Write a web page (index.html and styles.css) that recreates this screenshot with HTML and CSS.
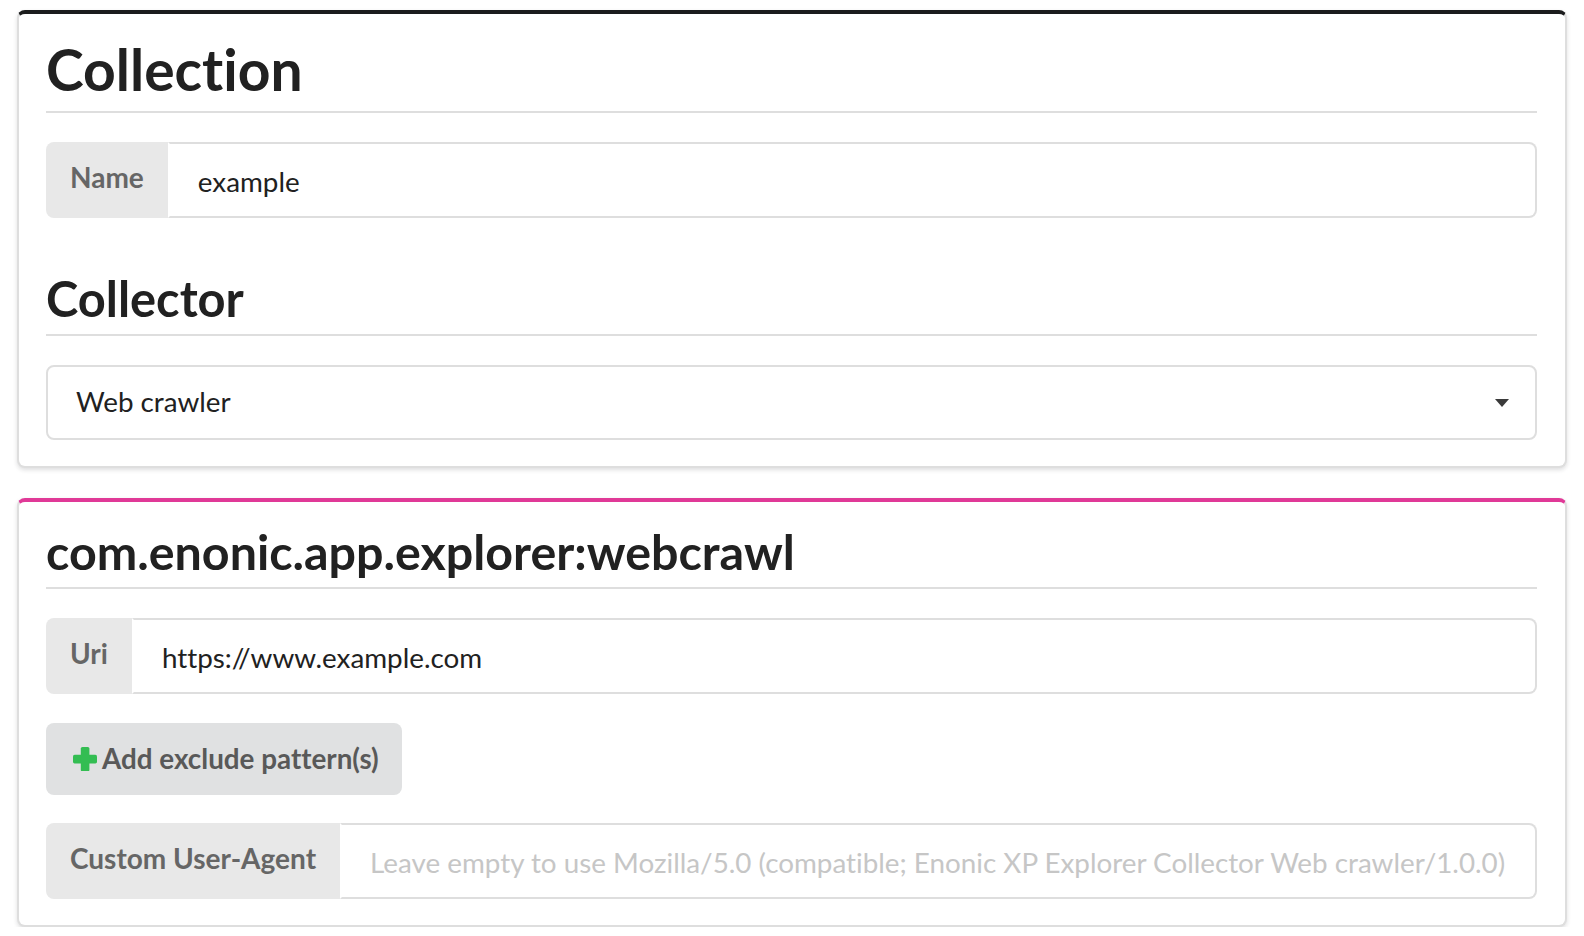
FILE: index.html
```html
<!DOCTYPE html>
<html lang="en">
<head>
<meta charset="utf-8">
<title>Collection</title>
<link rel="stylesheet" href="styles.css">
</head>
<body>
  <div class="page">
    <section class="segment segment-black">
      <h1 class="header header-large">Collection</h1>
      <div class="labeled-input">
        <div class="label">Name</div>
        <input class="input" type="text" value="example">
      </div>
      <h2 class="header header-medium">Collector</h2>
      <div class="dropdown">
        <span class="dropdown-text">Web crawler</span>
        <svg class="dropdown-icon" width="14" height="8" viewBox="0 0 14 8"><path d="M0 0 L14 0 L7 8 Z" fill="#3a3a3a"/></svg>
      </div>
    </section>
    <section class="segment segment-pink">
      <h2 class="header header-app">com.enonic.app.explorer:webcrawl</h2>
      <div class="labeled-input">
        <div class="label">Uri</div>
        <input class="input" type="text" value="https://www.example.com">
      </div>
      <div class="field-row">
        <button class="button" type="button">
          <svg class="plus-icon" width="24" height="24" viewBox="0 0 24 24"><rect x="0" y="7.8" width="24" height="8.6" rx="1.6" fill="#33bd52"/><rect x="7.8" y="0" width="8.6" height="24.4" rx="1.6" fill="#33bd52"/></svg>
          <span>Add exclude pattern(s)</span>
        </button>
      </div>
      <div class="labeled-input">
        <div class="label">Custom User-Agent</div>
        <input class="input input-wide" type="text" placeholder="Leave empty to use Mozilla/5.0 (compatible; Enonic XP Explorer Collector Web crawler/1.0.0)">
      </div>
    </section>
  </div>
</body>
</html>
```

FILE: styles.css
```css
* { box-sizing: border-box; }

html, body {
  margin: 0;
  padding: 0;
  background: #ffffff;
}

body {
  font-family: "Lato", "Liberation Sans", sans-serif;
  font-variant-ligatures: none;
  font-feature-settings: "liga" 0, "clig" 0;
  color: #212121;
}

.page {
  display: flex;
  flex-direction: column;
  gap: 30px;
  padding: 10px 17px 0;
}

.segment {
  background: #ffffff;
  border: 2px solid #dedede;
  border-radius: 8px;
  box-shadow: 0 2px 4px 0 rgba(34, 36, 38, 0.15);
  padding: 28px 28px 26px 27px;
  display: flex;
  flex-direction: column;
}

.segment-black { border-top: 4px solid #1b1c1d; }
.segment-pink { border-top: 4px solid #e03997; }

.header {
  margin: 0;
  font-weight: 700;
  color: #212121;
  border-bottom: 2px solid #dedede;
}

.header-large {
  font-size: 57px;
  line-height: 57px;
  margin-top: -1px;
  padding-bottom: 13px;
  margin-bottom: 29px;
}

.header-medium {
  font-size: 48.8px;
  line-height: 48px;
  margin-top: 56px;
  padding-bottom: 12px;
  margin-bottom: 29px;
}

.header-app {
  font-size: 48.4px;
  line-height: 48px;
  margin-top: -3px;
  padding-bottom: 12px;
  margin-bottom: 29px;
}

.labeled-input {
  display: flex;
  align-items: stretch;
  height: 76px;
  font-size: 27.8px;
}

.label {
  flex: 0 0 auto;
  background: #e8e8e8;
  color: #666666;
  font-weight: 700;
  font-size: 28px;
  line-height: 28px;
  padding: 21px 24px 0 24px;
  border-radius: 8px 0 0 8px;
  white-space: nowrap;
}

.input {
  flex: 1 1 auto;
  min-width: 0;
  margin: 0;
  height: 76px;
  font-family: "Lato", "Liberation Sans", sans-serif;
  font-variant-ligatures: none;
  font-feature-settings: "liga" 0, "clig" 0;
  font-size: 27.8px;
  color: #212121;
  background: #ffffff;
  border: 2px solid #dedede;
  border-left-color: transparent;
  border-radius: 0 8px 8px 0;
  padding: 3px 28px 0 28px;
  outline: none;
}

.input-wide {
  padding-right: 12px;
}

.input::placeholder {
  color: #c6c6c6;
  opacity: 1;
}

.dropdown {
  display: flex;
  align-items: center;
  justify-content: space-between;
  height: 75px;
  border: 2px solid #dedede;
  border-radius: 8px;
  padding: 0 26px 3px 28px;
  font-size: 27.8px;
  color: #212121;
}

.dropdown-icon {
  display: block;
  flex: 0 0 auto;
  margin-top: 4px;
}

.field-row {
  display: flex;
  margin: 29px 0 28px;
}

.button {
  display: flex;
  align-items: center;
  gap: 5px;
  height: 72px;
  margin: 0;
  padding: 0 23px 0 27px;
  background: #e0e1e2;
  color: #595959;
  border: none;
  border-radius: 8px;
  font-family: "Lato", "Liberation Sans", sans-serif;
  font-variant-ligatures: none;
  font-size: 27.8px;
  font-weight: 700;
  line-height: 28px;
  cursor: pointer;
}

.plus-icon {
  display: block;
  flex: 0 0 auto;
}
```
